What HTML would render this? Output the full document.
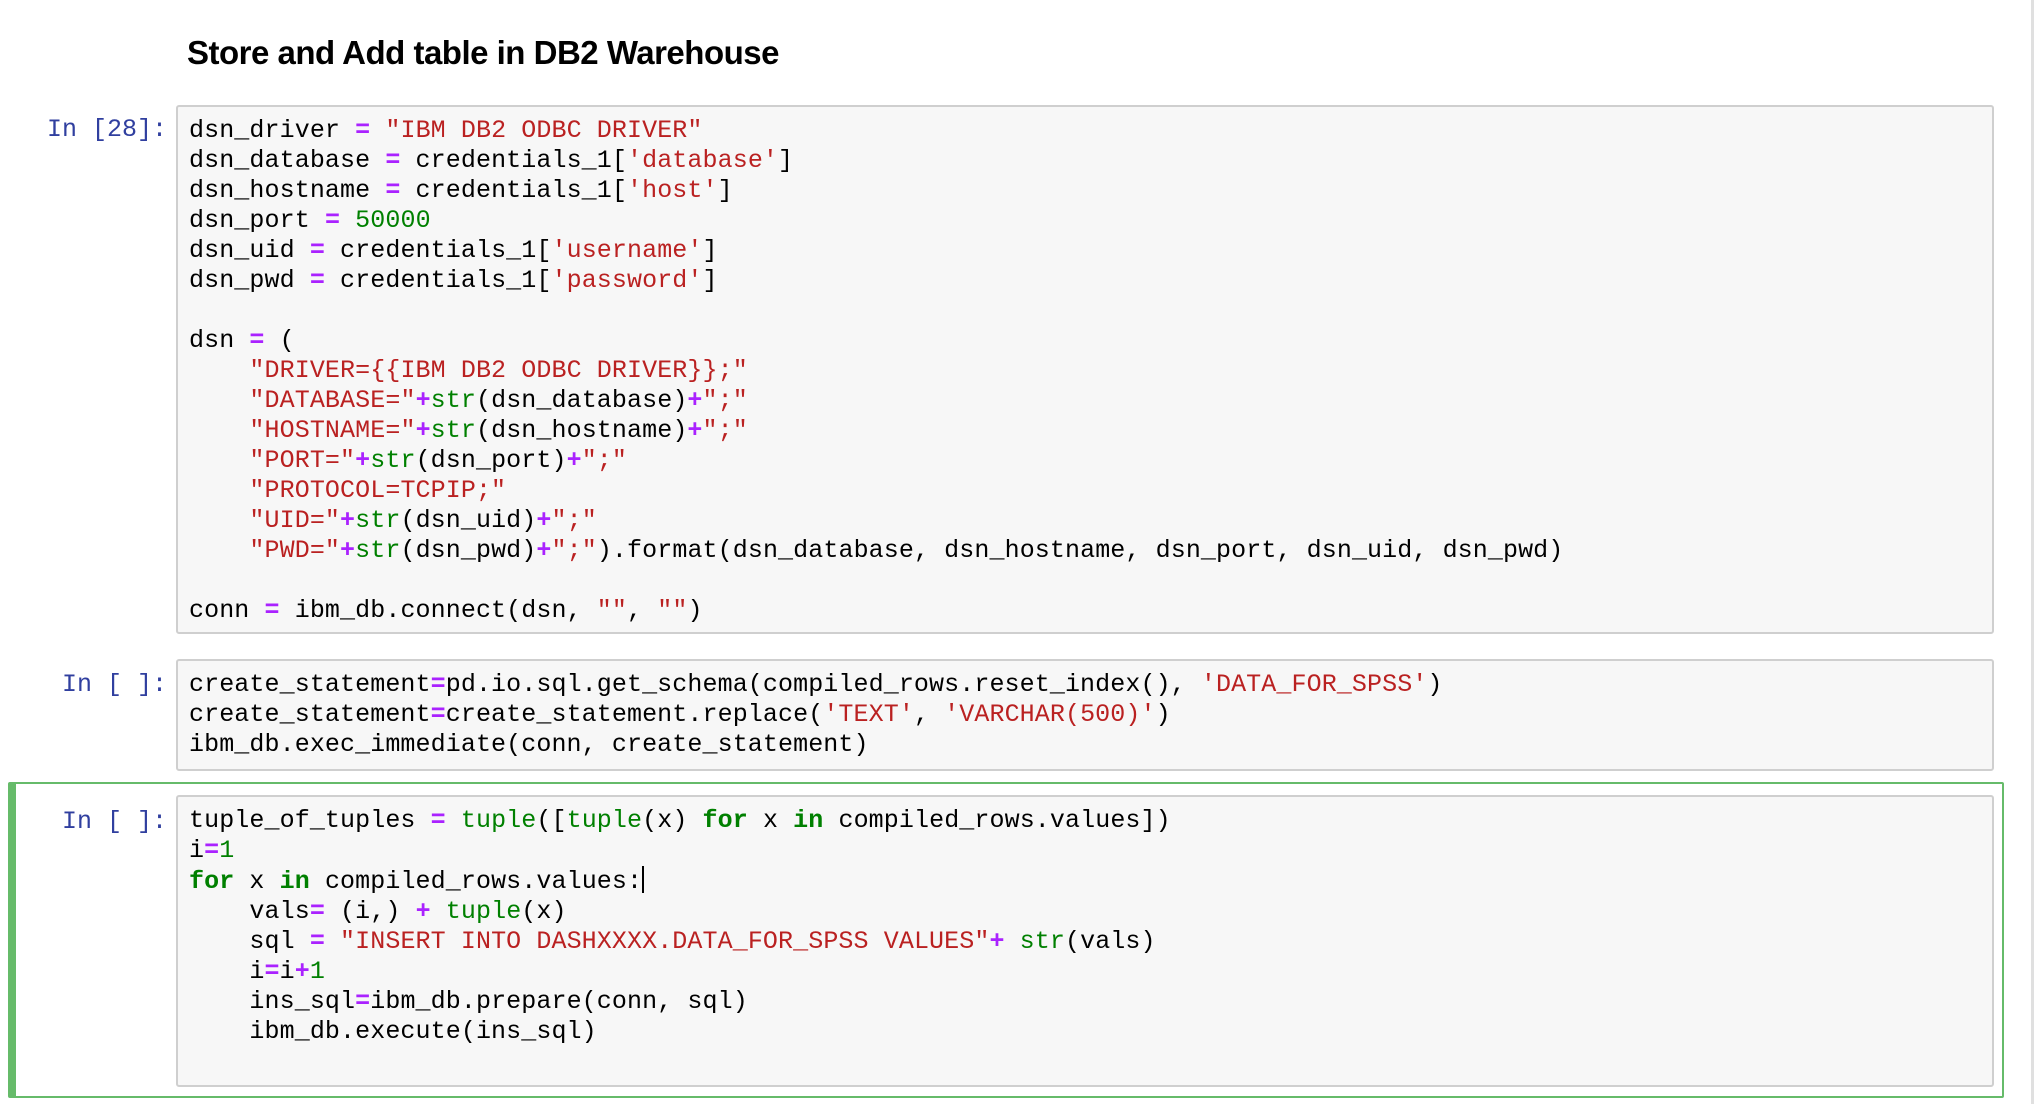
<!DOCTYPE html>
<html><head><meta charset="utf-8"><style>
body{margin:0;width:2034px;height:1104px;background:#fff;position:relative;overflow:hidden;font-family:"Liberation Mono",monospace;}
h1{position:absolute;left:187px;top:34px;margin:0;font:bold 33px "Liberation Sans",sans-serif;color:#000;letter-spacing:-0.5px}
.box{position:absolute;left:176px;width:1818px;background:#f7f7f7;border:2px solid #cfcfcf;border-radius:3px;box-sizing:border-box}
pre{margin:0;padding:9px 0 0 11px;font:25px/30px "Liberation Mono",monospace;color:#000;letter-spacing:0.1px}
.p{position:absolute;right:1867px;font:25px/30px "Liberation Mono",monospace;color:#303F9F;white-space:pre}
.s{color:#BA2121}.o{color:#AA22FF;font-weight:bold}.n{color:#008000}.k{color:#008000;font-weight:bold}.b{color:#008000}
.sel{position:absolute;left:8px;top:782px;width:1996px;height:316px;border:2px solid #66BB6A;border-left:8px solid #66BB6A;box-sizing:border-box;border-radius:2px}
.sb{position:absolute;left:2031px;top:0;width:3px;height:1104px;background:#e0e0e0}
.cur{display:inline-block;width:2px;height:27px;background:#000;vertical-align:-5px}
</style></head><body>
<h1>Store and Add table in DB2 Warehouse</h1>
<div class="p" style="top:115px">In [28]:</div>
<div class="box" style="top:105px;height:529px"><pre>dsn_driver <span class="o">=</span> <span class="s">"IBM DB2 ODBC DRIVER"</span>
dsn_database <span class="o">=</span> credentials_1[<span class="s">'database'</span>]
dsn_hostname <span class="o">=</span> credentials_1[<span class="s">'host'</span>]
dsn_port <span class="o">=</span> <span class="n">50000</span>
dsn_uid <span class="o">=</span> credentials_1[<span class="s">'username'</span>]
dsn_pwd <span class="o">=</span> credentials_1[<span class="s">'password'</span>]

dsn <span class="o">=</span> (
    <span class="s">"DRIVER={{IBM DB2 ODBC DRIVER}};"</span>
    <span class="s">"DATABASE="</span><span class="o">+</span><span class="b">str</span>(dsn_database)<span class="o">+</span><span class="s">";"</span>
    <span class="s">"HOSTNAME="</span><span class="o">+</span><span class="b">str</span>(dsn_hostname)<span class="o">+</span><span class="s">";"</span>
    <span class="s">"PORT="</span><span class="o">+</span><span class="b">str</span>(dsn_port)<span class="o">+</span><span class="s">";"</span>
    <span class="s">"PROTOCOL=TCPIP;"</span>
    <span class="s">"UID="</span><span class="o">+</span><span class="b">str</span>(dsn_uid)<span class="o">+</span><span class="s">";"</span>
    <span class="s">"PWD="</span><span class="o">+</span><span class="b">str</span>(dsn_pwd)<span class="o">+</span><span class="s">";"</span>).format(dsn_database, dsn_hostname, dsn_port, dsn_uid, dsn_pwd)

conn <span class="o">=</span> ibm_db.connect(dsn, <span class="s">""</span>, <span class="s">""</span>)</pre></div>
<div class="p" style="top:670px">In [ ]:</div>
<div class="box" style="top:659px;height:112px"><pre>create_statement<span class="o">=</span>pd.io.sql.get_schema(compiled_rows.reset_index(), <span class="s">'DATA_FOR_SPSS'</span>)
create_statement<span class="o">=</span>create_statement.replace(<span class="s">'TEXT'</span>, <span class="s">'VARCHAR(500)'</span>)
ibm_db.exec_immediate(conn, create_statement)</pre></div>
<div class="sel"></div>
<div class="p" style="top:807px">In [ ]:</div>
<div class="box" style="top:795px;height:292px"><pre>tuple_of_tuples <span class="o">=</span> <span class="b">tuple</span>([<span class="b">tuple</span>(x) <span class="k">for</span> x <span class="k">in</span> compiled_rows.values])
i<span class="o">=</span><span class="n">1</span>
<span class="k">for</span> x <span class="k">in</span> compiled_rows.values:<span class="cur"></span>
    vals<span class="o">=</span> (i,) <span class="o">+</span> <span class="b">tuple</span>(x)
    sql <span class="o">=</span> <span class="s">"INSERT INTO DASHXXXX.DATA_FOR_SPSS VALUES"</span><span class="o">+</span> <span class="b">str</span>(vals)
    i<span class="o">=</span>i<span class="o">+</span><span class="n">1</span>
    ins_sql<span class="o">=</span>ibm_db.prepare(conn, sql)
    ibm_db.execute(ins_sql)</pre></div>
<div class="sb"></div>
</body></html>
